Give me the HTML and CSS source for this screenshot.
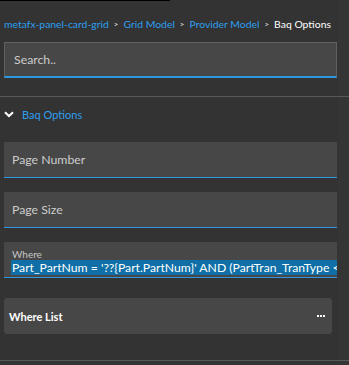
FILE: index.html
```html
<!DOCTYPE html>
<html>
<head>
<meta charset="utf-8">
<link rel="stylesheet" href="styles.css">
</head>
<body>
<div class="page">
  <div class="topline"></div>
  <div class="main">
    <nav class="crumbs">
      <span class="crumb">metafx-panel-card-grid</span>
      <span class="sep">&gt;</span>
      <span class="crumb">Grid Model</span>
      <span class="sep">&gt;</span>
      <span class="crumb">Provider Model</span>
      <span class="sep">&gt;</span>
      <span class="crumb current">Baq Options</span>
    </nav>
    <div class="search field">Search..</div>
    <div class="divider"></div>
    <div class="section-head">
      <svg class="chev" width="10" height="7" viewBox="0 0 10 7"><path d="M1 1.2 L5 5 L9 1.2" fill="none" stroke="#ffffff" stroke-width="2"/></svg>
      <span class="section-title">Baq Options</span>
    </div>
    <div class="fields">
      <div class="field input">Page Number</div>
      <div class="field input">Page Size</div>
      <div class="field input where">
        <span class="label">Where</span>
        <span class="value"><span class="sel">Part_PartNum = '??{Part.PartNum}' AND (PartTran_TranType &lt;&gt; 'STK-STK')</span></span>
      </div>
      <div class="card">
        <span class="card-title">Where List</span>
        <span class="dots"><i></i><i></i><i></i></span>
      </div>
    </div>
    <div class="divider bottom"></div>
  </div>
  <div class="scroll-track"></div>
</div>
</body>
</html>
```
FILE: styles.css
```css
html, body {
  margin: 0;
  padding: 0;
  background: #333333;
  width: 349px;
  height: 365px;
  overflow: hidden;
  font-family: Lato, "Noto Sans", sans-serif;
}
.page {
  position: relative;
  width: 349px;
  height: 365px;
}
.topline {
  position: absolute;
  left: 0;
  top: 0;
  width: 170px;
  height: 1px;
  background: #000;
}
.scroll-track {
  position: absolute;
  right: 0;
  top: 0;
  width: 11px;
  height: 365px;
  background: rgba(255, 255, 255, 0.012);
  pointer-events: none;
}
.main {
  display: flex;
  flex-direction: column;
}
.crumbs {
  display: flex;
  align-items: center;
  gap: 5px;
  padding: 16px 0 0 4px;
  height: 17px;
  font-size: 10.4px;
  line-height: 17px;
  white-space: nowrap;
}
.crumb { color: #2d9ff0; }
.crumb.current { color: #ffffff; }
.sep {
  color: #cfcfcf;
  font-size: 8px;
  font-weight: bold;
}
.field {
  box-sizing: border-box;
  margin: 0 12px 0 4px;
  height: 36px;
  background: #474747;
  border-bottom: 1px solid #2e97e0;
  color: #cccccc;
  font-size: 12.3px;
  display: flex;
  align-items: center;
}
.search {
  margin-top: 9px;
  border: 1px solid #606060;
  border-bottom: 2px solid #2e97e0;
  padding-left: 9px;
}
.divider {
  margin-top: 18px;
  height: 1px;
  background: #585858;
}
.section-head {
  display: flex;
  align-items: center;
  gap: 8px;
  padding-left: 4px;
  height: 36px;
  margin-top: -1px;
}
.chev { display: block; }
.section-title {
  color: #2d9ff0;
  font-size: 11px;
}
.fields {
  display: flex;
  flex-direction: column;
  gap: 14px;
  margin-top: 10px;
}
.input {
  padding-left: 8px;
}
.where {
  flex-direction: column;
  align-items: stretch;
  justify-content: flex-end;
  padding: 0 0 2px 8px;
  overflow: hidden;
}
.label {
  font-size: 10px;
  line-height: 12px;
  color: #c4c4c4;
}
.value {
  display: block;
  height: 15px;
  white-space: nowrap;
  overflow: hidden;
  margin-left: -1px;
}
.sel {
  background: #0f6fa6;
  color: #ffffff;
  font-size: 12.2px;
  line-height: 16px;
  padding-left: 1px;
}
.card {
  margin: 6px 17px 0 4px;
  height: 36px;
  border-radius: 3px;
  background: #474747;
  display: flex;
  align-items: center;
  justify-content: space-between;
  padding: 0 7px 0 5px;
}
.card-title {
  color: #ffffff;
  font-size: 11px;
  font-weight: 700;
}
.dots {
  display: flex;
  gap: 1px;
}
.dots i {
  display: block;
  width: 2px;
  height: 2px;
  background: #ffffff;
}
.divider.bottom {
  margin-top: 26px;
}
```
